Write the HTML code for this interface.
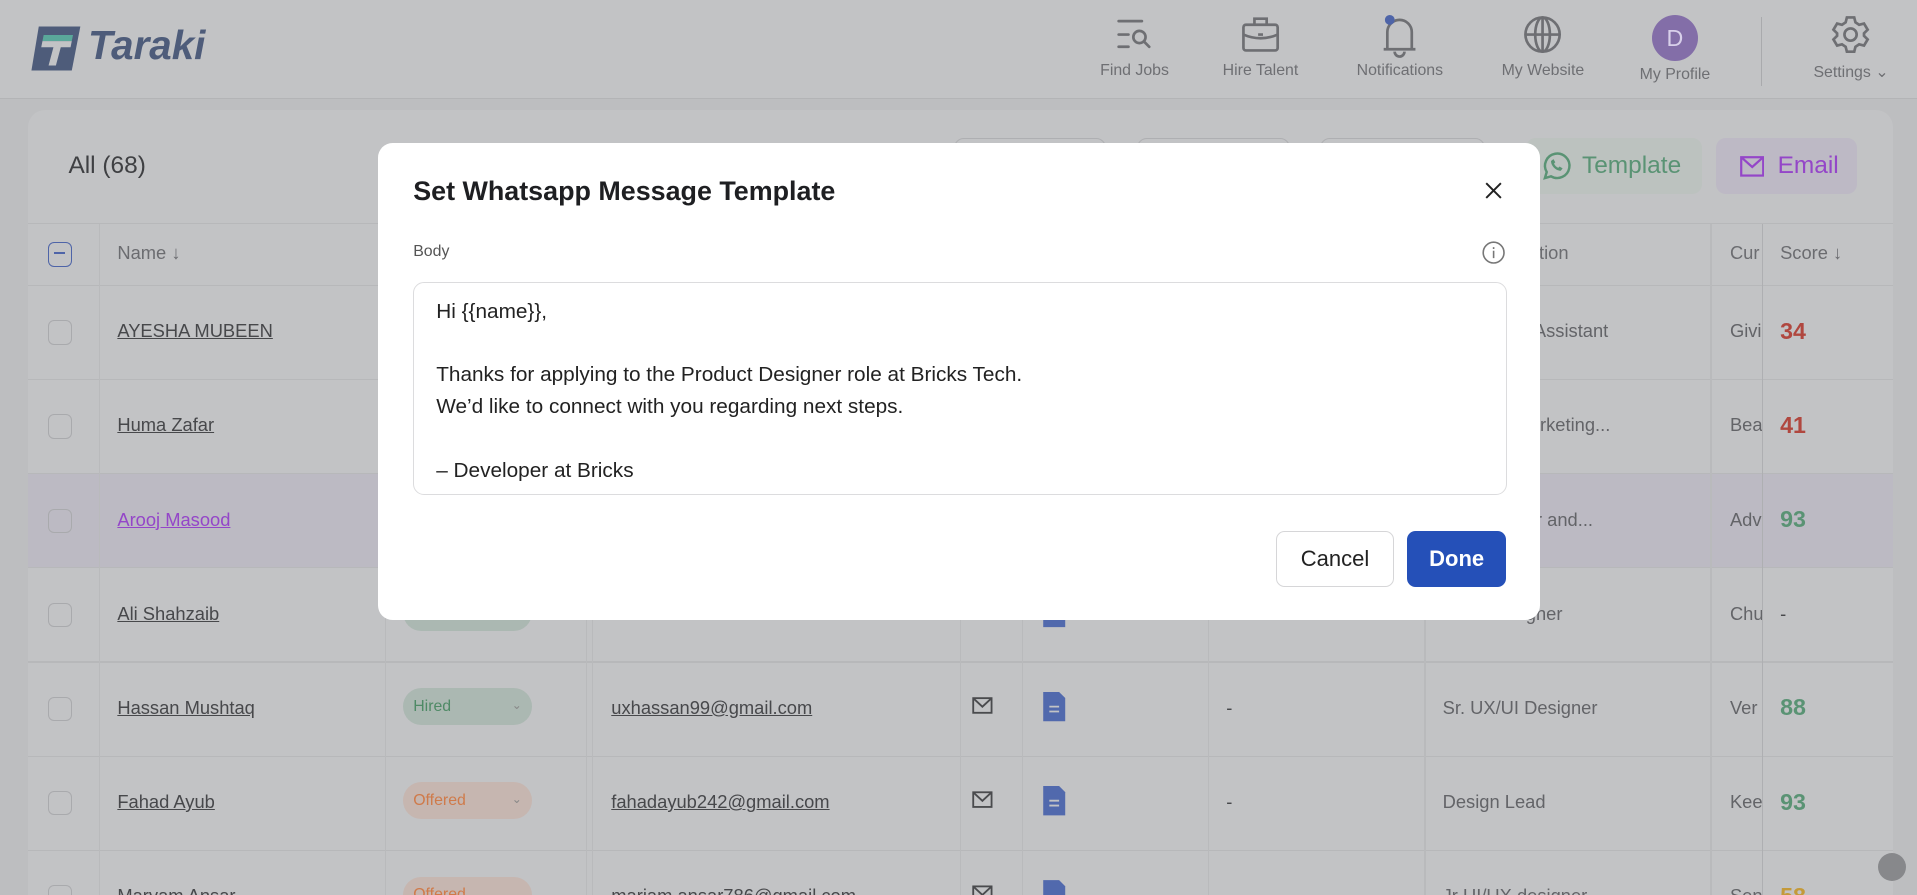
<!DOCTYPE html>
<html><head><meta charset="utf-8">
<style>
*{box-sizing:border-box;margin:0;padding:0}
html,body{width:1917px;height:895px;overflow:hidden;background:#bdbec0}
#w{zoom:1.22258;width:1568px;height:732px;position:relative;font-family:"Liberation Sans",sans-serif;background:#bdbec0;overflow:hidden}
.hdr{position:absolute;left:0;top:0;width:1568px;height:81px;background:#c2c3c5;border-bottom:1px solid #b3b4b6}
.nav{position:absolute;top:0;text-align:center;color:#6e6f73;font-size:13px}
.nav svg{display:block;margin:12px auto 0}
.nav span{display:block;margin-top:7px;white-space:nowrap}
.card{position:absolute;left:23px;top:90px;width:1525px;height:642px;background:#c2c3c5;border-radius:14px 14px 0 0;overflow:hidden}
.a{position:absolute}
.hl{position:absolute;left:0;width:1525px;height:1px;background:#b7b8ba}
.vl{position:absolute;top:93px;width:1px;height:620px;background:#b9babc}
.cb{position:absolute;left:16px;width:20px;height:20px;border:1.5px solid #a9aaad;border-radius:5px}
.nm{position:absolute;left:73px;font-size:15px;color:#47484b;text-decoration:underline}
.pill{position:absolute;left:307px;width:105px;height:30px;border-radius:15px;font-size:13px;padding:8px 8px;}
.em{position:absolute;left:477px;font-size:15px;color:#47484b;text-decoration:underline}
.pos{position:absolute;left:1157px;font-size:15px;color:#636468}
.cur{position:absolute;left:1392px;font-size:15px;color:#636468;width:26px;overflow:hidden;white-space:nowrap}
.sc{position:absolute;left:1433px;font-size:19px;font-weight:bold}
.dash{position:absolute;left:980px;font-size:15px;color:#47484b}
.modal{position:absolute;left:309px;top:117px;width:951px;height:390px;background:#fff;border-radius:12px}
</style></head><body><div id="w">
<div class="hdr">
 <svg class="a" style="left:24px;top:20px" width="44" height="40" viewBox="0 0 44 40"><path d="M8 2 H42 L35 38 H2 Z" fill="#4e5c7a"/><path d="M12 9 H36 L35 14 H11 Z" fill="#5aa89a"/><path d="M11 14 H35 L34 19 H26 L22 34 H16 L20 19 H10 Z" fill="#c2c3c5"/></svg>
 <div class="a" style="left:72px;top:18px;font-size:33px;font-weight:bold;font-style:italic;color:#4e5c7a">Taraki</div>
 <div class="nav" style="left:893px;width:70px"><svg width="32" height="32" viewBox="0 0 32 32" fill="none" stroke="#6e6f73" stroke-width="2.2" stroke-linecap="round"><path d="M3 5h19M3 16h8M3 26h8"/><circle cx="20" cy="18" r="5"/><path d="M24 22l4 4"/></svg><span>Find Jobs</span></div>
 <div class="nav" style="left:993px;width:76px"><svg width="32" height="32" viewBox="0 0 32 32" fill="none" stroke="#6e6f73" stroke-width="2.2"><rect x="2" y="8" width="28" height="21" rx="2"/><path d="M11 8V3h10v5M2 16c9 4 19 4 28 0M14 16h4"/></svg><span>Hire Talent</span></div>
 <div class="nav" style="left:1100px;width:90px"><svg width="32" height="36" viewBox="0 0 32 36" fill="none" stroke="#6e6f73" stroke-width="2.2"><path d="M6 28V14a10 10 0 0 1 20 0v14h3H3zM12 30a4 4 0 0 0 8 0"/><circle cx="8" cy="4" r="4" fill="#4e64a8" stroke="none"/></svg><span style="margin-top:3px">Notifications</span></div>
 <div class="nav" style="left:1222px;width:80px"><svg width="32" height="32" viewBox="0 0 32 32" fill="none" stroke="#6e6f73" stroke-width="2.2"><circle cx="16" cy="16" r="14"/><ellipse cx="16" cy="16" rx="6" ry="14"/><path d="M2 16h28M16 2v28"/></svg><span>My Website</span></div>
 <div class="nav" style="left:1335px;width:70px"><div style="width:38px;height:38px;border-radius:50%;background:#836ea8;color:#d8d0ea;font-size:19px;line-height:38px;margin:12px auto 0">D</div><span style="margin-top:4px">My Profile</span></div>
 <div class="a" style="left:1440px;top:14px;width:1px;height:56px;background:#a9aaad"></div>
 <div class="nav" style="left:1474px;width:80px"><svg width="32" height="32" viewBox="0 0 32 32" fill="none" stroke="#6e6f73" stroke-width="2.2"><path d="M13 2h6l1 4 3 2 4-1 3 5-3 3v2l3 3-3 5-4-1-3 2-1 4h-6l-1-4-3-2-4 1-3-5 3-3v-2l-3-3 3-5 4 1 3-2z"/><circle cx="16" cy="16" r="5"/></svg><span>Settings ⌄</span></div>
</div>
<div class="card">
 <div class="a" style="left:33px;top:34px;font-size:20px;color:#3f4043">All (68)</div>
 <div class="a" style="left:757px;top:23px;width:125px;height:45px;border:1px solid #aeafb2;border-radius:8px"></div>
 <div class="a" style="left:907px;top:23px;width:125px;height:45px;border:1px solid #aeafb2;border-radius:8px"></div>
 <div class="a" style="left:1057px;top:23px;width:135px;height:45px;border:1px solid #aeafb2;border-radius:8px"></div>
 <div class="a" style="left:1225px;top:23px;width:144px;height:46px;background:#bcc2bf;border-radius:8px"></div>
 <svg class="a" style="left:1237px;top:33px" width="26" height="26" viewBox="0 0 26 26" fill="none" stroke="#5a9374" stroke-width="2"><path d="M4 23l1.5-5A10 10 0 1 1 9 21.5z"/><path d="M9 9c0 4 4 8 8 8l1.5-2-2.5-1.5-1 1c-1.5-.5-3-2-3.5-3.5l1-1L11 7.5z" fill="#5a9374" stroke="none"/></svg>
 <div class="a" style="left:1271px;top:34px;font-size:20px;color:#5a9374">Template</div>
 <div class="a" style="left:1381px;top:23px;width:115px;height:46px;background:#bdb9c5;border-radius:8px"></div>
 <svg class="a" style="left:1400px;top:38px" width="20" height="17" viewBox="0 0 20 17" fill="none" stroke="#9446c8" stroke-width="1.8"><rect x="1" y="1" width="18" height="15"/><path d="M1 1l9 8 9-8"/></svg>
 <div class="a" style="left:1431px;top:34px;font-size:20px;color:#9446c8">Email</div>
 <div class="hl" style="top:92px"></div>
 <div class="a" style="left:0;top:297px;width:1525px;height:77px;background:#bcbac3"></div>
 <div class="hl" style="top:143px"></div><div class="hl" style="top:220px"></div><div class="hl" style="top:297px"></div><div class="hl" style="top:374px"></div><div class="hl" style="top:451px"></div><div class="hl" style="top:528px"></div><div class="hl" style="top:605px"></div>
 <div class="vl" style="left:58px"></div><div class="vl" style="left:292px"></div><div class="vl" style="left:456px"></div><div class="vl" style="left:461px"></div><div class="vl" style="left:762px"></div><div class="vl" style="left:813px"></div><div class="vl" style="left:965px"></div><div class="vl" style="left:1142px"></div><div class="vl" style="left:1376px"></div><div class="vl" style="left:1418px;background:#aeafb2"></div>
 <div class="cb" style="top:108px;border-color:#4e64a8"><div style="position:absolute;left:4px;top:7px;width:9px;height:2px;background:#4e64a8"></div></div>
 <div class="a" style="left:73px;top:108px;font-size:15px;color:#6b6c70">Name ↓</div>
 <div class="a" style="left:1225px;top:108px;font-size:15px;color:#6b6c70">sition</div>
 <div class="a" style="left:1392px;top:108px;font-size:15px;color:#6b6c70;width:26px;overflow:hidden">Cur</div>
 <div class="a" style="left:1433px;top:108px;font-size:15px;color:#6b6c70">Score ↓</div>

 <div class="cb" style="top:172px"></div><div class="nm" style="top:172px">AYESHA MUBEEN</div><div class="pos" style="left:1225px;top:172px">l Assistant</div><div class="cur" style="top:172px">Givi</div><div class="sc" style="top:170px;color:#b0473f">34</div>
 <div class="cb" style="top:249px"></div><div class="nm" style="top:249px">Huma Zafar</div><div class="pos" style="left:1225px;top:249px">larketing...</div><div class="cur" style="top:249px">Bea</div><div class="sc" style="top:247px;color:#b0473f">41</div>
 <div class="cb" style="top:326px"></div><div class="nm" style="top:326px;color:#9446c8">Arooj Masood</div><div class="pos" style="left:1225px;top:326px">er and...</div><div class="cur" style="top:326px">Adv</div><div class="sc" style="top:324px;color:#5a9374">93</div>
 <div class="cb" style="top:403px"></div><div class="nm" style="top:403px">Ali Shahzaib</div><div class="pill" style="top:396px;background:#abb8b2"></div><div class="pos" style="left:1225px;top:403px">gner</div><div class="cur" style="top:403px">Chu</div><div class="a" style="left:1433px;top:403px;font-size:15px;color:#47484b">-</div>
 <div class="cb" style="top:480px"></div><div class="nm" style="top:480px">Hassan Mushtaq</div><div class="pill" style="top:473px;background:#abb8b2;color:#4f8a66">Hired<span style="float:right;font-size:10px;color:#888">⌄</span></div><div class="em" style="top:480px">uxhassan99@gmail.com</div><div class="dash" style="top:480px">-</div><div class="pos" style="top:480px">Sr. UX/UI Designer</div><div class="cur" style="top:480px">Ver</div><div class="sc" style="top:478px;color:#5a9374">88</div>
 <div class="cb" style="top:557px"></div><div class="nm" style="top:557px">Fahad Ayub</div><div class="pill" style="top:550px;background:#c6b6b0;color:#cf7a4a">Offered<span style="float:right;font-size:10px;color:#888">⌄</span></div><div class="em" style="top:557px">fahadayub242@gmail.com</div><div class="dash" style="top:557px">-</div><div class="pos" style="top:557px">Design Lead</div><div class="cur" style="top:557px">Kee</div><div class="sc" style="top:555px;color:#5a9374">93</div>
 <div class="cb" style="top:634px"></div><div class="nm" style="top:634px">Maryam Ansar</div><div class="pill" style="top:627px;background:#c6b6b0;color:#cf7a4a">Offered</div><div class="em" style="top:634px">mariam.ansar786@gmail.com</div><div class="dash" style="top:634px">-</div><div class="pos" style="top:634px">Jr UI/UX designer</div><div class="cur" style="top:634px">Sen</div><div class="sc" style="top:632px;color:#c49a3a">58</div>
</div>
<svg class="a" style="left:795px;top:494px" width="17" height="238" viewBox="0 0 17 238" fill="none" stroke="#4a4b4e" stroke-width="1.5"><g><rect x="1" y="77" width="15" height="12"/><path d="M1 77l7.5 7 7.5-7"/></g><g transform="translate(0,77)"><rect x="1" y="77" width="15" height="12"/><path d="M1 77l7.5 7 7.5-7"/></g><g transform="translate(0,154)"><rect x="1" y="77" width="15" height="12"/><path d="M1 77l7.5 7 7.5-7"/></g></svg>
<svg class="a" style="left:852px;top:490px" width="20" height="242" viewBox="0 0 20 242"><g fill="#5169ad"><path d="M1 76h13l5 5v19H1z"/><path d="M1 153h13l5 5v19H1z"/><path d="M1 230h13l5 5v19H1z"/><path d="M1 0h13l5 5v18H1z"/></g><g stroke="#c2c3c5" stroke-width="1.5"><path d="M6 88h8M6 92h8M6 165h8M6 169h8"/></g></svg>
<div class="modal">
 <div class="a" style="left:29px;top:27px;font-size:22px;font-weight:bold;color:#1e1f22">Set Whatsapp Message Template</div>
 <svg class="a" style="left:906px;top:32px" width="14" height="14" viewBox="0 0 14 14" stroke="#222" stroke-width="1.6"><path d="M1 1l12 12M13 1L1 13"/></svg>
 <div class="a" style="left:29px;top:82px;font-size:13px;color:#555">Body</div>
 <svg class="a" style="left:903px;top:80px" width="19" height="19" viewBox="0 0 19 19" fill="none" stroke="#777" stroke-width="1.3"><circle cx="9.5" cy="9.5" r="8.5"/><path d="M9.5 8v6M9.5 5v1.5"/></svg>
 <div class="a" style="left:29px;top:114px;width:895px;height:174px;border:1px solid #dcdcde;border-radius:9px;padding:10px 18px;font-size:17px;line-height:26px;color:#222">Hi {{name}},<br><br>Thanks for applying to the Product Designer role at Bricks Tech.<br>We’d like to connect with you regarding next steps.<br><br>– Developer at Bricks</div>
 <div class="a" style="left:735px;top:317px;width:96px;height:46px;border:1px solid #d6d6d8;border-radius:7px;font-size:18px;line-height:44px;text-align:center;color:#222">Cancel</div>
 <div class="a" style="left:842px;top:317px;width:81px;height:46px;background:#2550b8;border-radius:7px;font-size:18px;font-weight:bold;line-height:46px;text-align:center;color:#fff">Done</div>
</div>
<div class="a" style="left:1536px;top:698px;width:23px;height:23px;border-radius:50%;background:#87888b"></div>
</div></body></html>
